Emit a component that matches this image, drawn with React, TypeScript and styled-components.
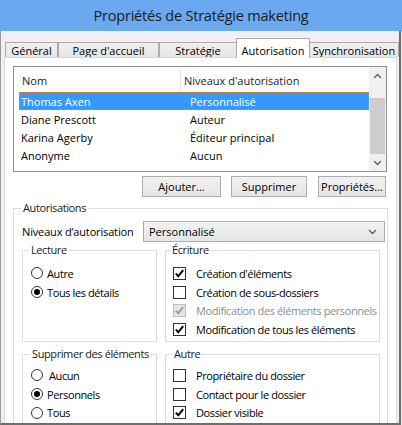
import { createGlobalStyle, styled } from "styled-components";

const GlobalStyle = createGlobalStyle`
    html, body {
        margin: 0;
        padding: 0;
        background: #f0f0f0;
    }
    body {
        font-family: "Open Sans", "Noto Sans", sans-serif;
        font-size: 11px;
        color: #000;
    }
    * {
        box-sizing: border-box;
    }
`

const Frame = styled.div`
    width: 402px;
    height: 425px;
    overflow: hidden;
    display: flex;
    flex-direction: column;
`

const TitleBar = styled.div`
    height: 31px;
    flex: none;
    background: #6aa9f0;
    display: flex;
    align-items: center;
    justify-content: center;
    font-size: 14.5px;
    letter-spacing: -0.2px;
    color: #1b1b1b;
`

const Body = styled.div`
    width: 401px;
    flex: 1;
    min-height: 0;
    display: flex;
    flex-direction: column;
    background: #f0f0f0;
    border-left: 1px solid #9b9b9b;
    border-right: 2px solid #6e6e6e;
    border-bottom: 2px solid #6e6e6e;
    padding: 7px 2px 0 3px;
`

const TabStrip = styled.div`
    height: 19px;
    flex: none;
    display: flex;
    align-items: flex-end;
    padding-left: 1px;
    position: relative;
    z-index: 1;
`

const Tab = styled.div<{ $active?: boolean; $w: number }>`
    width: ${p => p.$w}px;
    flex: none;
    height: ${p => (p.$active ? 20 : 15)}px;
    margin: ${p => (p.$active ? "0 -1px -1px -1px" : "0")};
    padding-top: ${p => (p.$active ? 4 : 0)}px;
    line-height: 15px;
    text-align: center;
    white-space: nowrap;
    overflow: hidden;
    border: 1px solid #acacac;
    border-bottom: none;
    background: ${p => (p.$active ? "#fff" : "linear-gradient(#f0f0f0, #e6e6e6)")};
    position: relative;
    z-index: ${p => (p.$active ? 2 : 1)};
`

const Panel = styled.div`
    flex: 1;
    min-height: 0;
    overflow: hidden;
    background: #fff;
    border: 1px solid #d9d9d9;
    border-bottom: none;
    padding: 8px 9px 0 8px;
`

const ListBox = styled.div`
    height: 106px;
    border: 1px solid #8e8f8f;
    display: flex;
`

const ListMain = styled.div`
    flex: 1;
    display: flex;
    flex-direction: column;
`

const ListHeader = styled.div`
    height: 25px;
    display: flex;
`

const HeaderCell = styled.div<{ $w?: number; $divider?: boolean }>`
    ${p => (p.$w ? `width: ${p.$w}px;` : "flex: 1;")}
    display: flex;
    align-items: center;
    padding-left: ${p => (p.$divider ? 3 : 8)}px;
    padding-top: 2px;
    border-left: ${p => (p.$divider ? "1px solid #e5e5e5" : "none")};
    color: #1b1b1b;
`

const Rows = styled.div`
    margin-left: 5px;
`

const Row = styled.div<{ $selected?: boolean }>`
    height: 18px;
    display: flex;
    align-items: center;
    border: 1px ${p => (p.$selected ? "dotted #d0843f" : "solid transparent")};
    background: ${p => (p.$selected ? "#3399ff" : "transparent")};
    color: ${p => (p.$selected ? "#fff" : "#000")};
`

const NameCell = styled.div`
    width: 169px;
    padding-left: 1px;
`

const LevelCell = styled.div`
    flex: 1;
    padding-left: 1px;
`

const ScrollBar = styled.div`
    width: 17px;
    flex: none;
    background: #f0f0f0;
    display: flex;
    flex-direction: column;
`

const ScrollButton = styled.div`
    height: 17px;
    flex: none;
    display: flex;
    align-items: center;
    justify-content: center;
`

const ScrollTrack = styled.div`
    flex: 1;
    padding-top: 14px;
`

const Thumb = styled.div`
    height: 56px;
    margin: 0 1px;
    background: #cdcdcd;
`

const ButtonRow = styled.div`
    margin-top: 4px;
    padding-right: 1px;
    display: flex;
    justify-content: flex-end;
`

const Button = styled.div<{ $w: number; $gap?: number }>`
    width: ${p => p.$w}px;
    height: 21px;
    margin-right: ${p => p.$gap ?? 0}px;
    border: 1px solid #adadad;
    background: linear-gradient(#f2f2f2, #e5e5e5);
    display: flex;
    align-items: center;
    justify-content: center;
`

const Group = styled.fieldset<{ $h?: number }>`
    margin: 0;
    padding: 0;
    min-width: 0;
    border: 1px solid #dcdcdc;
    ${p => (p.$h ? `height: ${p.$h}px;` : "")}
`

const Legend = styled.legend<{ $indent: number }>`
    margin-left: ${p => p.$indent}px;
    padding: 0 2px;
    line-height: 14px;
    white-space: nowrap;
    color: #1b1b1b;
`

const MainGroup = styled(Group)`
    margin: 4px -1px 0 0;
    height: 260px;
    letter-spacing: -0.4px;
`

const MainInner = styled.div`
    padding: 0 2px 0 8px;
`

const LevelRow = styled.div`
    margin-top: 6px;
    display: flex;
    align-items: center;
`

const LevelLabel = styled.div`
    width: 121px;
    flex: none;
    letter-spacing: -0.15px;
`

const Select = styled.div`
    flex: 1;
    height: 21px;
    border: 1px solid #acacac;
    background: linear-gradient(#f2f2f2, #e5e5e5);
    display: flex;
    align-items: center;
    justify-content: space-between;
    padding: 0 7px 0 5px;
    letter-spacing: 0;
`

const Grid = styled.div`
    margin-top: 1px;
    display: grid;
    grid-template-columns: 135px 215px;
    column-gap: 8px;
    row-gap: 5px;
`

const Options = styled.div<{ $top: number; $left: number }>`
    padding: ${p => p.$top}px 0 0 ${p => p.$left}px;
`

const Option = styled.div<{ $disabled?: boolean }>`
    height: 18.7px;
    display: flex;
    align-items: center;
    white-space: nowrap;
    color: ${p => (p.$disabled ? "#8d8d8d" : "#000")};
`

const RadioCircle = styled.span<{ $on?: boolean; $gap: number }>`
    width: 12px;
    height: 12px;
    flex: none;
    border-radius: 50%;
    border: 1px solid #333;
    background: #fff;
    margin-right: ${p => p.$gap}px;
    display: flex;
    align-items: center;
    justify-content: center;
    &::after {
        content: "";
        width: 6px;
        height: 6px;
        border-radius: 50%;
        background: ${p => (p.$on ? "#000" : "transparent")};
    }
`

const Box = styled.span<{ $disabled?: boolean }>`
    width: 13px;
    height: 13px;
    flex: none;
    border: 1px solid ${p => (p.$disabled ? "#bcbcbc" : "#333")};
    background: ${p => (p.$disabled ? "#e6e6e6" : "#fff")};
    margin-right: 10px;
    display: flex;
    align-items: center;
    justify-content: center;
`

const Chevron = ({ up }: { up?: boolean }) => (
    <svg width="9" height="6" viewBox="0 0 9 6">
        <path
            d={up ? "M1 5 L4.5 1.5 L8 5" : "M1 1 L4.5 4.5 L8 1"}
            fill="none"
            stroke="#606060"
            strokeWidth="1.4"
        />
    </svg>
)

function Radio({ label, on, gap = 4 }: { label: string; on?: boolean; gap?: number }) {
    return (
        <Option>
            <RadioCircle $on={on} $gap={gap} />
            {label}
        </Option>
    )
}

function Check({ label, on, disabled }: { label: string; on?: boolean; disabled?: boolean }) {
    return (
        <Option $disabled={disabled}>
            <Box $disabled={disabled}>
                {on && (
                    <svg width="11" height="11" viewBox="0 0 11 11">
                        <path
                            d="M1.8 5.6 L4.3 8.2 L9.2 2.2"
                            fill="none"
                            stroke={disabled ? "#9c9c9c" : "#000"}
                            strokeWidth="1.9"
                        />
                    </svg>
                )}
            </Box>
            {label}
        </Option>
    )
}

const users = [
    { name: "Thomas Axen", level: "Personnalisé", selected: true },
    { name: "Diane Prescott", level: "Auteur" },
    { name: "Karina Agerby", level: "Éditeur principal" },
    { name: "Anonyme", level: "Aucun" },
]

export default function App() {
    return (
        <Frame>
            <GlobalStyle />
            <TitleBar>Propriétés de Stratégie maketing</TitleBar>
            <Body>
                <TabStrip>
                    <Tab $w={53}>Général</Tab>
                    <Tab $w={101}>Page d'accueil</Tab>
                    <Tab $w={78}>Stratégie</Tab>
                    <Tab $w={74} $active>Autorisation</Tab>
                    <Tab $w={90}>Synchronisation</Tab>
                </TabStrip>
                <Panel>
                    <ListBox>
                        <ListMain>
                            <ListHeader>
                                <HeaderCell $w={166}>Nom</HeaderCell>
                                <HeaderCell $divider>Niveaux d'autorisation</HeaderCell>
                            </ListHeader>
                            <Rows>
                                {users.map(u => (
                                    <Row key={u.name} $selected={u.selected}>
                                        <NameCell>{u.name}</NameCell>
                                        <LevelCell>{u.level}</LevelCell>
                                    </Row>
                                ))}
                            </Rows>
                        </ListMain>
                        <ScrollBar>
                            <ScrollButton><Chevron up /></ScrollButton>
                            <ScrollTrack><Thumb /></ScrollTrack>
                            <ScrollButton><Chevron /></ScrollButton>
                        </ScrollBar>
                    </ListBox>
                    <ButtonRow>
                        <Button $w={79} $gap={10}>Ajouter...</Button>
                        <Button $w={76} $gap={11}>Supprimer</Button>
                        <Button $w={68}>Propriétés...</Button>
                    </ButtonRow>
                    <MainGroup>
                        <Legend $indent={7}>Autorisations</Legend>
                        <MainInner>
                            <LevelRow>
                                <LevelLabel>Niveaux d’autorisation</LevelLabel>
                                <Select>
                                    Personnalisé
                                    <Chevron />
                                </Select>
                            </LevelRow>
                            <Grid>
                                <Group $h={99}>
                                    <Legend $indent={6}>Lecture</Legend>
                                    <Options $top={7} $left={8}>
                                        <Radio label="Autre" />
                                        <Radio label="Tous les détails" on />
                                    </Options>
                                </Group>
                                <Group $h={99}>
                                    <Legend $indent={4}>Écriture</Legend>
                                    <Options $top={7} $left={7}>
                                        <Check label="Création d'éléments" on />
                                        <Check label="Création de sous-dossiers" />
                                        <Check label="Modification des éléments personnels" on disabled />
                                        <Check label="Modification de tous les éléments" on />
                                    </Options>
                                </Group>
                                <Group $h={99}>
                                    <Legend $indent={7}>Supprimer des éléments</Legend>
                                    <Options $top={5} $left={8}>
                                        <Radio label="Aucun" gap={6} />
                                        <Radio label="Personnels" on />
                                        <Radio label="Tous" />
                                    </Options>
                                </Group>
                                <Group $h={99}>
                                    <Legend $indent={6}>Autre</Legend>
                                    <Options $top={5} $left={7}>
                                        <Check label="Propriétaire du dossier" />
                                        <Check label="Contact pour le dossier" />
                                        <Check label="Dossier visible" on />
                                    </Options>
                                </Group>
                            </Grid>
                        </MainInner>
                    </MainGroup>
                </Panel>
            </Body>
        </Frame>
    )
}
